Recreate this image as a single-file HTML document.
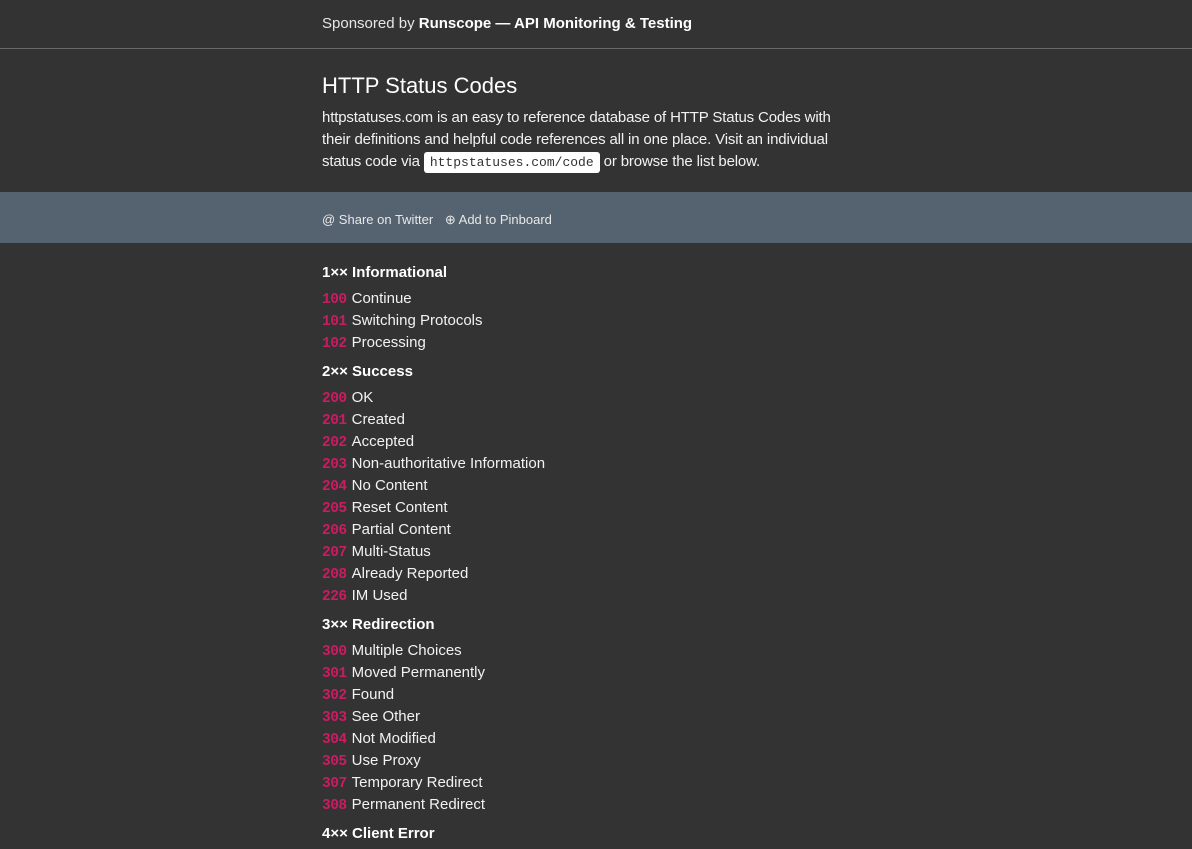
<!DOCTYPE html>
<html><head><meta charset="utf-8"><style>
*{margin:0;padding:0;box-sizing:border-box}
body{background:#333333;color:#f2f2f2;font-family:"Liberation Sans",sans-serif;font-size:15px;width:1192px;height:845px;overflow:hidden}
.wrap{margin-left:322px;width:560px}
.top{height:49px;border-bottom:1px solid #6a6a6a;line-height:48px;color:#e6e6e6}
.top b{font-weight:bold;color:#fff}
h1{font-size:22px;font-weight:normal;color:#fff;line-height:26px;margin-top:24px}
p{line-height:22px;margin-top:8px;white-space:nowrap;color:#f2f2f2;letter-spacing:-0.15px}
code{font-family:"Liberation Mono",monospace;font-size:13px;background:#fff;color:#333;border-radius:3px;padding:3px 6px;letter-spacing:0}
.band{position:absolute;top:192px;left:0;width:1192px;height:51px;background:#556270;color:#e8e8e8;font-size:13px;line-height:56px}
.band span{margin-right:8px}
.list{position:absolute;top:262px;left:322px}
h2{font-size:15px;font-weight:bold;color:#fff;line-height:22px;margin-bottom:4px}
h2.n{margin-top:7px}
.i{line-height:22px;height:22px;white-space:nowrap}
.i em{font-style:normal;font-family:"Liberation Mono",monospace;font-weight:bold;font-size:14.5px;color:#c81d62;margin-right:5px;letter-spacing:-0.5px}
</style></head><body>
<div class="top"><div class="wrap">Sponsored by <b>Runscope — API Monitoring &amp; Testing</b></div></div>
<div class="wrap">
<h1>HTTP Status Codes</h1>
<p>httpstatuses.com is an easy to reference database of HTTP Status Codes with<br>their definitions and helpful code references all in one place. Visit an individual<br>status code via <code>httpstatuses.com/code</code> or browse the list below.</p>
</div>
<div class="band"><div class="wrap"><span>@ Share on Twitter</span> <span>⊕ Add to Pinboard</span></div></div>
<div class="list">
<h2>1×× Informational</h2>
<div class="i"><em>100</em>Continue</div>
<div class="i"><em>101</em>Switching Protocols</div>
<div class="i"><em>102</em>Processing</div>
<h2 class="n">2×× Success</h2>
<div class="i"><em>200</em>OK</div>
<div class="i"><em>201</em>Created</div>
<div class="i"><em>202</em>Accepted</div>
<div class="i"><em>203</em>Non-authoritative Information</div>
<div class="i"><em>204</em>No Content</div>
<div class="i"><em>205</em>Reset Content</div>
<div class="i"><em>206</em>Partial Content</div>
<div class="i"><em>207</em>Multi-Status</div>
<div class="i"><em>208</em>Already Reported</div>
<div class="i"><em>226</em>IM Used</div>
<h2 class="n">3×× Redirection</h2>
<div class="i"><em>300</em>Multiple Choices</div>
<div class="i"><em>301</em>Moved Permanently</div>
<div class="i"><em>302</em>Found</div>
<div class="i"><em>303</em>See Other</div>
<div class="i"><em>304</em>Not Modified</div>
<div class="i"><em>305</em>Use Proxy</div>
<div class="i"><em>307</em>Temporary Redirect</div>
<div class="i"><em>308</em>Permanent Redirect</div>
<h2 class="n">4×× Client Error</h2>
</div>
</body></html>
